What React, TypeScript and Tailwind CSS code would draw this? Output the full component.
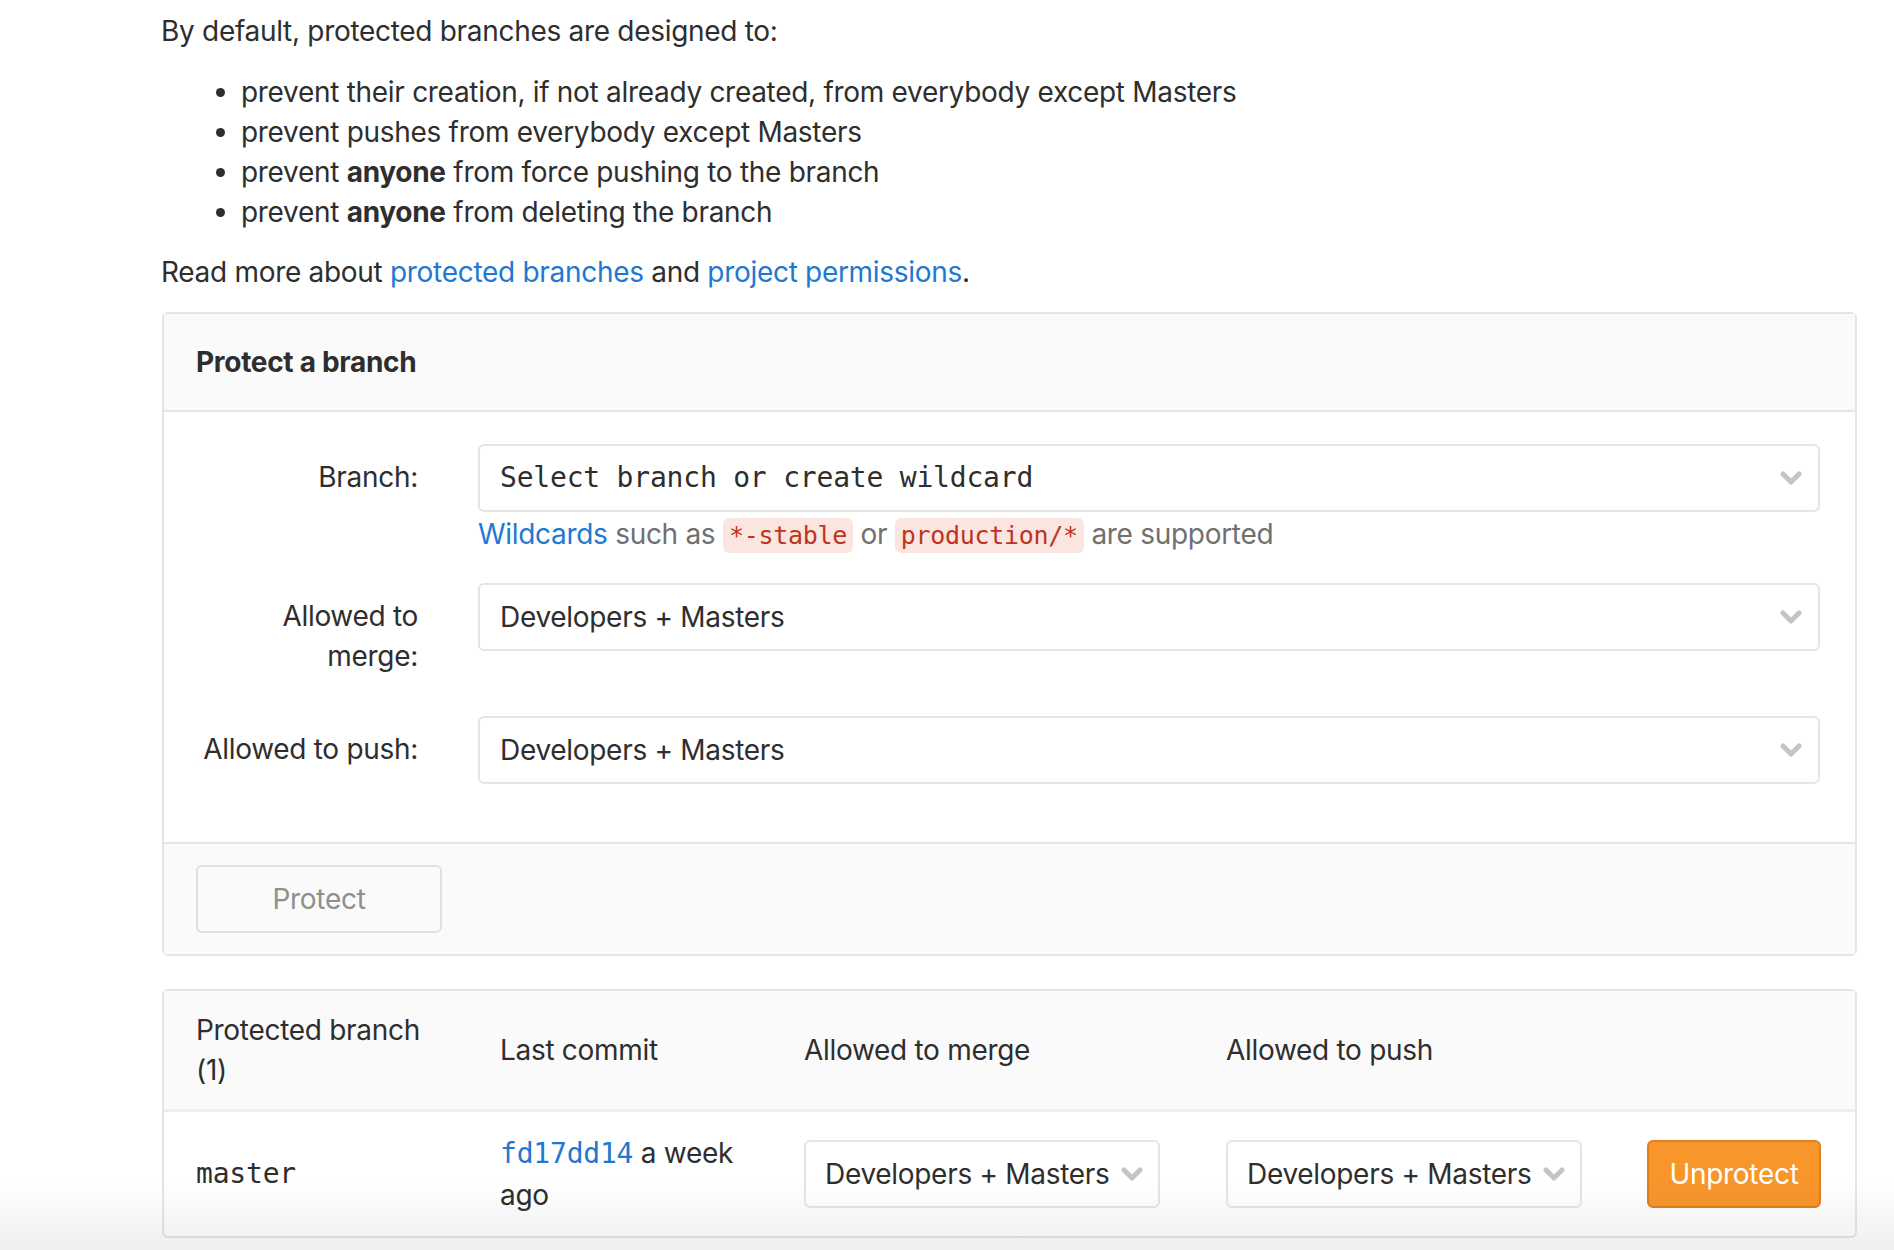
import React from 'react';

const sans = 'font-["Inter","Noto_Sans",sans-serif]';
const mono = 'font-["DejaVu_Sans_Mono","Liberation_Mono",monospace]';

const Chevron = ({ className = '' }: { className?: string }): JSX.Element => (
  <svg className={className} width="22" height="14" viewBox="0 0 22 14" fill="none">
    <path d="M3 3l8 8 8-8" stroke="#c4c4c4" strokeWidth="5" strokeLinecap="round" strokeLinejoin="round" />
  </svg>
);

const SelectBox = ({ children, monoText }: { children: React.ReactNode; monoText?: boolean }): JSX.Element => (
  <div className="flex h-[68px] items-center justify-between rounded-[6px] border-2 border-[#e5e5e5] bg-white pl-[20px] pr-[16px]">
    <span className={monoText ? `${mono} text-[28px] tracking-[-0.2px]` : ''}>{children}</span>
    <Chevron />
  </div>
);

const Code = ({ children }: { children: React.ReactNode }): JSX.Element => (
  <code className={`${mono} rounded-[6px] bg-[#fbe5e1] px-[6px] py-[3px] text-[25px] leading-[30px] text-[#c0341d]`}>
    {children}
  </code>
);

const App = (): JSX.Element => {
  return (
    <div
      className={`${sans} relative h-[1250px] overflow-hidden bg-white text-[28px] leading-[40px] tracking-[-0.3px] text-[#2e2e2e]`}
    >
      <div className="pl-[161px] pr-[37px] pt-[11px]">
        <p>By default, protected branches are designed to:</p>
        <ul className="mt-[21px] list-disc pl-[80px]">
          <li>prevent their creation, if not already created, from everybody except Masters</li>
          <li>prevent pushes from everybody except Masters</li>
          <li>
            prevent <strong className="font-bold">anyone</strong> from force pushing to the branch
          </li>
          <li>
            prevent <strong className="font-bold">anyone</strong> from deleting the branch
          </li>
        </ul>
        <p className="mt-[20px]">
          Read more about <a className="text-[#1f78d1]">protected branches</a> and{' '}
          <a className="text-[#1f78d1]">project permissions</a>.
        </p>

        {/* protect form */}
        <div className="mt-[20px] ml-[1px] rounded-[6px] border-2 border-[#e5e5e5]">
          <div className="flex h-[98px] items-center border-b-2 border-[#e5e5e5] bg-[#fafafa] px-[32px]">
            <h4 className="font-bold">Protect a branch</h4>
          </div>
          <div className="px-[32px] pt-[32px] pb-[58px]">
            <div className="flex">
              <label className="w-[222px] pt-[13px] text-right">Branch:</label>
              <div className="ml-[60px] mr-[3px] flex-1">
                <SelectBox monoText>Select branch or create wildcard</SelectBox>
                <p className="mt-[2px] text-[#707070]">
                  <a className="text-[#1f78d1]">Wildcards</a> such as <Code>*-stable</Code> or{' '}
                  <Code>production/*</Code> are supported
                </p>
              </div>
            </div>
            <div className="mt-[29px] flex">
              <label className="w-[222px] pt-[13px] text-right">
                Allowed to
                <br />
                merge:
              </label>
              <div className="ml-[60px] mr-[3px] flex-1">
                <SelectBox>Developers + Masters</SelectBox>
              </div>
            </div>
            <div className="mt-[40px] flex">
              <label className="w-[222px] pt-[13px] text-right">Allowed to push:</label>
              <div className="ml-[60px] mr-[3px] flex-1">
                <SelectBox>Developers + Masters</SelectBox>
              </div>
            </div>
          </div>
          <div className="border-t-2 border-[#e5e5e5] bg-[#fafafa] px-[32px] py-[21px]">
            <button className="h-[68px] w-[246px] rounded-[6px] border-2 border-[#e0e0e0] bg-[#fafafa] text-[#8f8f8f]">
              Protect
            </button>
          </div>
        </div>

        {/* protected branches table */}
        <div className="mt-[33px] ml-[1px] rounded-[6px] border-2 border-[#e5e5e5]">
          <div className="grid grid-cols-[304px_304px_422px_423px_1fr] items-center border-b-[3px] border-[#eeeeee] bg-[#fafafa] py-[19px]">
            <div className="px-[32px]">Protected branch (1)</div>
            <div className="px-[32px]">Last commit</div>
            <div className="px-[32px]">Allowed to merge</div>
            <div className="px-[32px]">Allowed to push</div>
            <div></div>
          </div>
          <div className="grid grid-cols-[304px_304px_422px_423px_1fr] items-center py-[20px]">
            <div className={`${mono} px-[32px] tracking-[-0.2px]`}>master</div>
            <div className="px-[32px] leading-[42px]">
              <a className={`${mono} leading-[30px] tracking-[-0.2px] text-[#1f78d1]`}>fd17dd14</a> a week ago
            </div>
            <div className="px-[32px]">
              <button className="flex h-[68px] w-[356px] items-center gap-[12px] rounded-[6px] border-2 border-[#e5e5e5] bg-white pl-[19px]">
                Developers + Masters
                <Chevron />
              </button>
            </div>
            <div className="px-[32px]">
              <button className="flex h-[68px] w-[356px] items-center gap-[12px] rounded-[6px] border-2 border-[#e5e5e5] bg-white pl-[19px]">
                Developers + Masters
                <Chevron />
              </button>
            </div>
            <div className="flex justify-end pr-[34px]">
              <button className="h-[68px] w-[174px] rounded-[6px] border-2 border-[#e07f1c] bg-[#f8952b] text-white">
                Unprotect
              </button>
            </div>
          </div>
        </div>
      </div>
      <div className="pointer-events-none absolute bottom-0 left-0 h-[70px] w-full bg-gradient-to-b from-transparent to-[#00000010]"></div>
    </div>
  );
};

export default App;
